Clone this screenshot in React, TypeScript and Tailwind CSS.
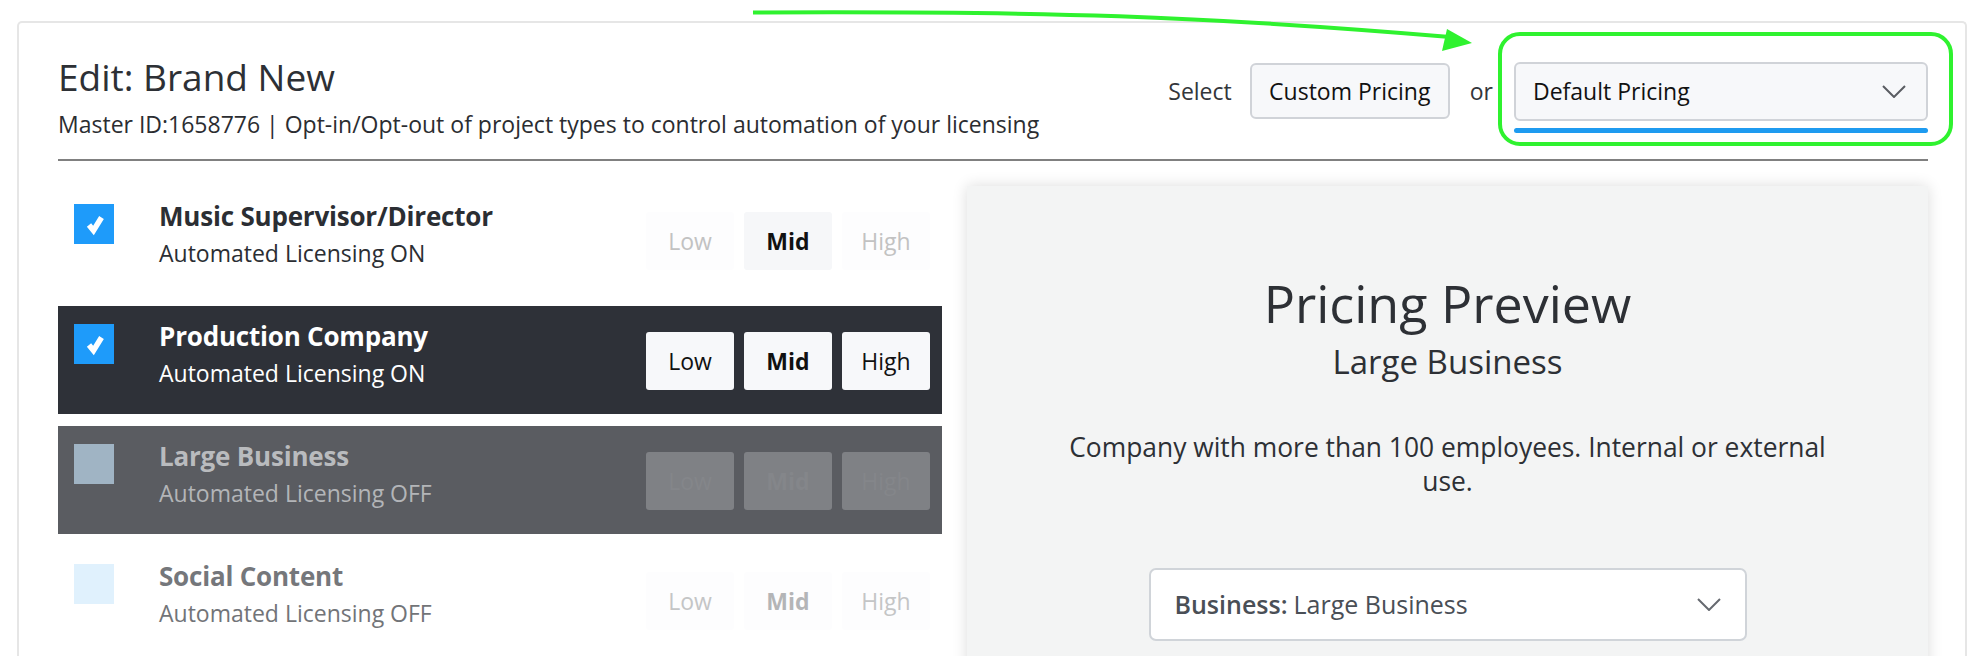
import React from "react";

type RowProps = {
  title: string;
  variant: "on" | "dark" | "gray" | "off";
};

function Check() {
  return (
    <svg width="40" height="40" viewBox="0 0 40 40">
      <polyline points="15,21 19.5,26.5 27.5,13.5" fill="none" stroke="#ffffff" strokeWidth="5.5" strokeLinecap="butt" strokeLinejoin="miter" />
    </svg>
  );
}

function Chevron({ color = "#5a5d62" }: { color?: string }) {
  return (
    <svg width="24" height="13" viewBox="0 0 24 13">
      <polyline points="1,1 12,12 23,1" fill="none" stroke={color} strokeWidth="2" />
    </svg>
  );
}

function Row({ title, variant }: RowProps) {
  const on = variant === "on" || variant === "dark";
  const rowBg =
    variant === "dark" ? "bg-[#2e3138]" : variant === "gray" ? "bg-[#5a5c61]" : "bg-white";
  const boxBg =
    variant === "gray" ? "bg-[#a0b4c4]" : variant === "off" ? "bg-[#e0f1fd]" : "bg-[#1e9bfa]";
  const titleCls =
    variant === "dark"
      ? "text-white"
      : variant === "gray"
      ? "text-[#b9bbbe]"
      : variant === "off"
      ? "text-[#75777b]"
      : "text-[#2b2e33]";
  const subCls =
    variant === "dark"
      ? "text-white"
      : variant === "gray"
      ? "text-[#b3b5b8]"
      : variant === "off"
      ? "text-[#727478]"
      : "text-[#2b2e33]";

  const btnBase = "w-[88px] h-[58px] rounded-[3px] flex items-center justify-center text-[23px]";
  let buttons: React.ReactNode;
  if (variant === "dark") {
    buttons = (
      <>
        <div className={`${btnBase} bg-[#f7f8fa] text-[#111]`}>Low</div>
        <div className={`${btnBase} bg-[#f7f8fa] text-[#111] font-bold`}>Mid</div>
        <div className={`${btnBase} bg-[#f7f8fa] text-[#111]`}>High</div>
      </>
    );
  } else if (variant === "gray") {
    buttons = (
      <>
        <div className={`${btnBase} bg-[#7f8185] text-[#84868a]`}>Low</div>
        <div className={`${btnBase} bg-[#7f8185] text-[#84868a] font-bold`}>Mid</div>
        <div className={`${btnBase} bg-[#7f8185] text-[#84868a]`}>High</div>
      </>
    );
  } else if (variant === "on") {
    buttons = (
      <>
        <div className={`${btnBase} bg-[#fdfdfe] text-[#c2c2c2]`}>Low</div>
        <div className={`${btnBase} bg-[#f6f7f9] text-[#111] font-bold`}>Mid</div>
        <div className={`${btnBase} bg-[#fdfdfe] text-[#c2c2c2]`}>High</div>
      </>
    );
  } else {
    buttons = (
      <>
        <div className={`${btnBase} bg-[#fdfdfe] text-[#c4c5c6]`}>Low</div>
        <div className={`${btnBase} bg-[#fdfdfe] text-[#b4b5b7] font-bold`}>Mid</div>
        <div className={`${btnBase} bg-[#fdfdfe] text-[#c4c5c6]`}>High</div>
      </>
    );
  }

  return (
    <div className={`h-[108px] flex items-start ${rowBg}`}>
      <div className={`ml-[16px] mt-[18px] w-[40px] h-[40px] ${boxBg}`}>{on && <Check />}</div>
      <div className="ml-[45px] mt-[12px]">
        <div className={`text-[26px] leading-[36px] font-bold tracking-[-0.2px] ${titleCls}`}>{title}</div>
        <div className={`text-[23px] leading-[36px] mt-[1px] ${subCls}`}>
          Automated Licensing {on ? "ON" : "OFF"}
        </div>
      </div>
      <div className="ml-auto mr-[12px] mt-[26px] flex gap-[10px]">{buttons}</div>
    </div>
  );
}

export default function App() {
  return (
    <div className="relative w-[1968px] h-[656px] overflow-hidden bg-white font-['Open_Sans',sans-serif]">
      <div className="ml-[17px] mt-[21px] w-[1950px] h-[700px] border-l-2 border-t-2 border-r-2 border-[#e6e6e6] rounded-t-[5px] pl-[39px] pr-[37px] pt-[32px]">
        {/* Header */}
        <div className="flex items-start justify-between">
          <div>
            <h1 className="text-[37px] leading-[44px] text-[#2d3035]">Edit: Brand New</h1>
            <p className="mt-[9px] text-[23px] leading-[32px] text-[#2b2d31]">
              Master ID:1658776 | Opt-in/Opt-out of project types to control automation of your licensing
            </p>
          </div>
          <div className="flex items-start mt-[7px]">
            <span className="h-[59px] flex items-center text-[23px] text-[#33363b]">Select</span>
            <div className="ml-[18px] mt-[1px] w-[200px] h-[56px] border-2 border-[#d0d3d8] rounded-[6px] bg-[#f7f8fa] flex items-center justify-center text-[23px] text-[#111]">
              Custom Pricing
            </div>
            <span className="ml-[20px] h-[59px] flex items-center text-[23px] text-[#33363b]">or</span>
            <div className="ml-[21px] w-[414px] flex flex-col">
              <div className="h-[59px] border-2 border-[#d0d3d8] rounded-[6px] bg-[#f7f8fa] flex items-center pl-[17px] pr-[20px] text-[23px] text-[#111]">
                <span>Default Pricing</span>
                <span className="ml-auto flex">
                  <Chevron />
                </span>
              </div>
              <div className="mt-[7px] h-[5px] rounded-full bg-[#1e9bf0]" />
            </div>
          </div>
        </div>

        <div className="mt-[19px] h-[2px] bg-[#808080]" />

        {/* Body */}
        <div className="mt-[25px] flex items-start">
          <div className="w-[884px] flex flex-col gap-[12px]">
            <Row title="Music Supervisor/Director" variant="on" />
            <Row title="Production Company" variant="dark" />
            <Row title="Large Business" variant="gray" />
            <Row title="Social Content" variant="off" />
          </div>
          <div className="ml-[25px] w-[961px] h-[520px] bg-[#f3f4f4] shadow-[0_0_14px_rgba(0,0,0,0.14)] flex flex-col items-center pt-[85px]">
            <div className="text-[52px] leading-[64px] text-[#2d3035]">Pricing Preview</div>
            <div className="mt-[7px] text-[33px] leading-[40px] text-[#2d3035]">Large Business</div>
            <div className="mt-[48px] w-[800px] text-center text-[26.4px] leading-[34px] text-[#2d3035]">
              Company with more than 100 employees. Internal or external use.
            </div>
            <div className="mt-[70px] w-[598px] h-[73px] bg-white border-2 border-[#d0d4d9] rounded-[7px] flex items-center pl-[24px] pr-[24px] text-[25px] text-[#4a4f56]">
              <span className="font-semibold">Business:</span>
              <span className="ml-[6px]">Large Business</span>
              <span className="ml-auto flex">
                <Chevron color="#666a70" />
              </span>
            </div>
          </div>
        </div>
      </div>

      {/* Annotation overlay */}
      <div className="absolute left-[1498px] top-[32px] w-[455px] h-[114px] border-4 border-[#2ff22f] rounded-[22px] pointer-events-none" />
      <svg className="absolute left-0 top-0 pointer-events-none" width="1968" height="70" viewBox="0 0 1968 70">
        <path d="M753 12.5 C 1050 11, 1200 16, 1450 37" fill="none" stroke="#2ff22f" strokeWidth="4" />
        <polygon points="1472,43 1447,29 1442,51" fill="#2ff22f" />
      </svg>
    </div>
  );
}
